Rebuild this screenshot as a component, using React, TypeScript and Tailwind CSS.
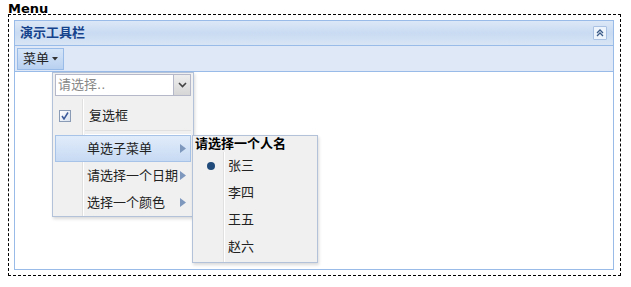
import React from 'react';

const font = { fontFamily: '"DejaVu Sans", "Noto Sans CJK SC", sans-serif' };

const Arrow = () => (
  <svg width="6" height="9" viewBox="0 0 6 9" className="shrink-0">
    <path d="M0 0 L6 4.5 L0 9 Z" fill="#7d97bd" />
  </svg>
);

const MenuRow = ({ label, active }: { label: string; active?: boolean }) => (
  <div
    className={`h-[27px] flex items-center pl-[31px] pr-[4px] text-[13px] text-[#222] whitespace-nowrap border ${
      active ? 'bg-gradient-to-b from-[#e1ecfa] to-[#c7daf3] border-[#a8c3e8]' : 'border-transparent'
    }`}
  >
    <span className="flex-1">{label}</span>
    <Arrow />
  </div>
);

const App: React.FC = () => {
  return (
    <div className="relative w-[631px] h-[287px] bg-white overflow-hidden" style={font}>
      <div className="pl-[8px] pt-[2px] h-[14px] text-[13px] leading-[14px] font-bold text-black" style={{ fontFamily: '"DejaVu Sans", sans-serif' }}>
        Menu
      </div>

      <div className="ml-[8px] w-[613px] h-[262px] border border-dashed border-black pl-[5px] pt-[5px]">
        <div className="w-[600px] h-[250px] border border-[#99bbe8] flex flex-col">
          {/* header */}
          <div className="h-[25px] flex items-center justify-between px-[5px] bg-gradient-to-b from-[#dce8f7] via-[#c9dbf2] to-[#d8e5f5] border-b border-[#99bbe8]">
            <span className="text-[13px] font-bold text-[#15428b]">演示工具栏</span>
            <div className="w-[14px] h-[14px] mr-[1px] border border-[#a9c1e2] bg-[#eef4fb] rounded-[1px] flex items-center justify-center">
              <svg width="8" height="8" viewBox="0 0 8 8">
                <path d="M1 4 L4 1 L7 4 M1 7 L4 4 L7 7" fill="none" stroke="#3a5a88" strokeWidth="1.3" />
              </svg>
            </div>
          </div>
          {/* toolbar */}
          <div className="h-[26px] flex items-center px-[2px] bg-[#dfe8f6] border-b border-[#99bbe8]">
            <div className="h-[22px] flex items-center gap-[3px] px-[5px] border border-[#99bbe8] bg-gradient-to-b from-[#d6e5f8] to-[#b9d1f0] text-[13px] text-[#222]">
              <span>菜单</span>
              <svg width="6" height="4" viewBox="0 0 6 4">
                <path d="M0 0 L6 0 L3 3.5 Z" fill="#333" />
              </svg>
            </div>
          </div>
          <div className="flex-1 bg-white" />
        </div>
      </div>

      {/* main menu */}
      <div className="absolute left-[52px] top-[72px] w-[142px] h-[145px] bg-[#f0f0f0] border border-[#b3c2d8] shadow-[1px_2px_3px_rgba(0,0,0,0.15)] flex flex-col pt-[1px] px-[2px]">
        <div className="absolute left-[29px] top-[26px] bottom-0 w-[2px] border-l border-[#e0e0e0] border-r border-r-white" />
        <div className="relative h-[22px] flex border border-[#b5b8c8] bg-white">
          <span className="flex-1 pl-[2px] text-[13px] leading-[20px] text-[#888]">请选择..</span>
          <div className="w-[17px] bg-gradient-to-b from-[#eeeeee] to-[#d6d6d6] border-l border-[#b5b8c8] flex items-center justify-center">
            <svg width="9" height="6" viewBox="0 0 9 6">
              <path d="M1 1 L4.5 4.5 L8 1" fill="none" stroke="#444" strokeWidth="1.6" />
            </svg>
          </div>
        </div>
        <div className="relative h-[34px] flex items-center pt-[6px] pl-[4px] text-[13px] text-[#222]">
          <div className="w-[12px] h-[12px] border border-[#8a9bb5] bg-gradient-to-br from-white to-[#d9e2ee] flex items-center justify-center">
            <svg width="8" height="8" viewBox="0 0 8 8">
              <path d="M1 4 L3 7 L7 0.5" fill="none" stroke="#3b5a99" strokeWidth="1.5" />
            </svg>
          </div>
          <span className="ml-[18px]">复选框</span>
        </div>
        <div className="relative ml-[30px] h-[5px] border-t border-[#e0e0e0] border-b border-b-white" />
        <div className="relative">
          <MenuRow label="单选子菜单" active />
          <MenuRow label="请选择一个日期" />
          <MenuRow label="选择一个颜色" />
        </div>
      </div>

      {/* sub menu */}
      <div className="absolute left-[192px] top-[135px] w-[126px] h-[128px] bg-[#f0f0f0] border border-[#b3c2d8] shadow-[1px_2px_3px_rgba(0,0,0,0.15)] px-[2px]">
        <div className="absolute left-[30px] top-[16px] bottom-0 w-[2px] border-l border-[#e0e0e0] border-r border-r-white" />
        <div className="relative h-[16px] text-[13px] leading-[16px] font-bold text-black whitespace-nowrap">请选择一个人名</div>
        {['张三', '李四', '王五', '赵六'].map((n, i) => (
          <div key={n} className="relative h-[27px] flex items-center text-[13px] text-[#222]">
            <div className="w-[32px] flex justify-center">
              {i === 0 && <div className="w-[8px] h-[8px] rounded-full bg-[#1f4a7a]" />}
            </div>
            <span className="ml-[1px]">{n}</span>
          </div>
        ))}
      </div>
    </div>
  );
};

export default App;
